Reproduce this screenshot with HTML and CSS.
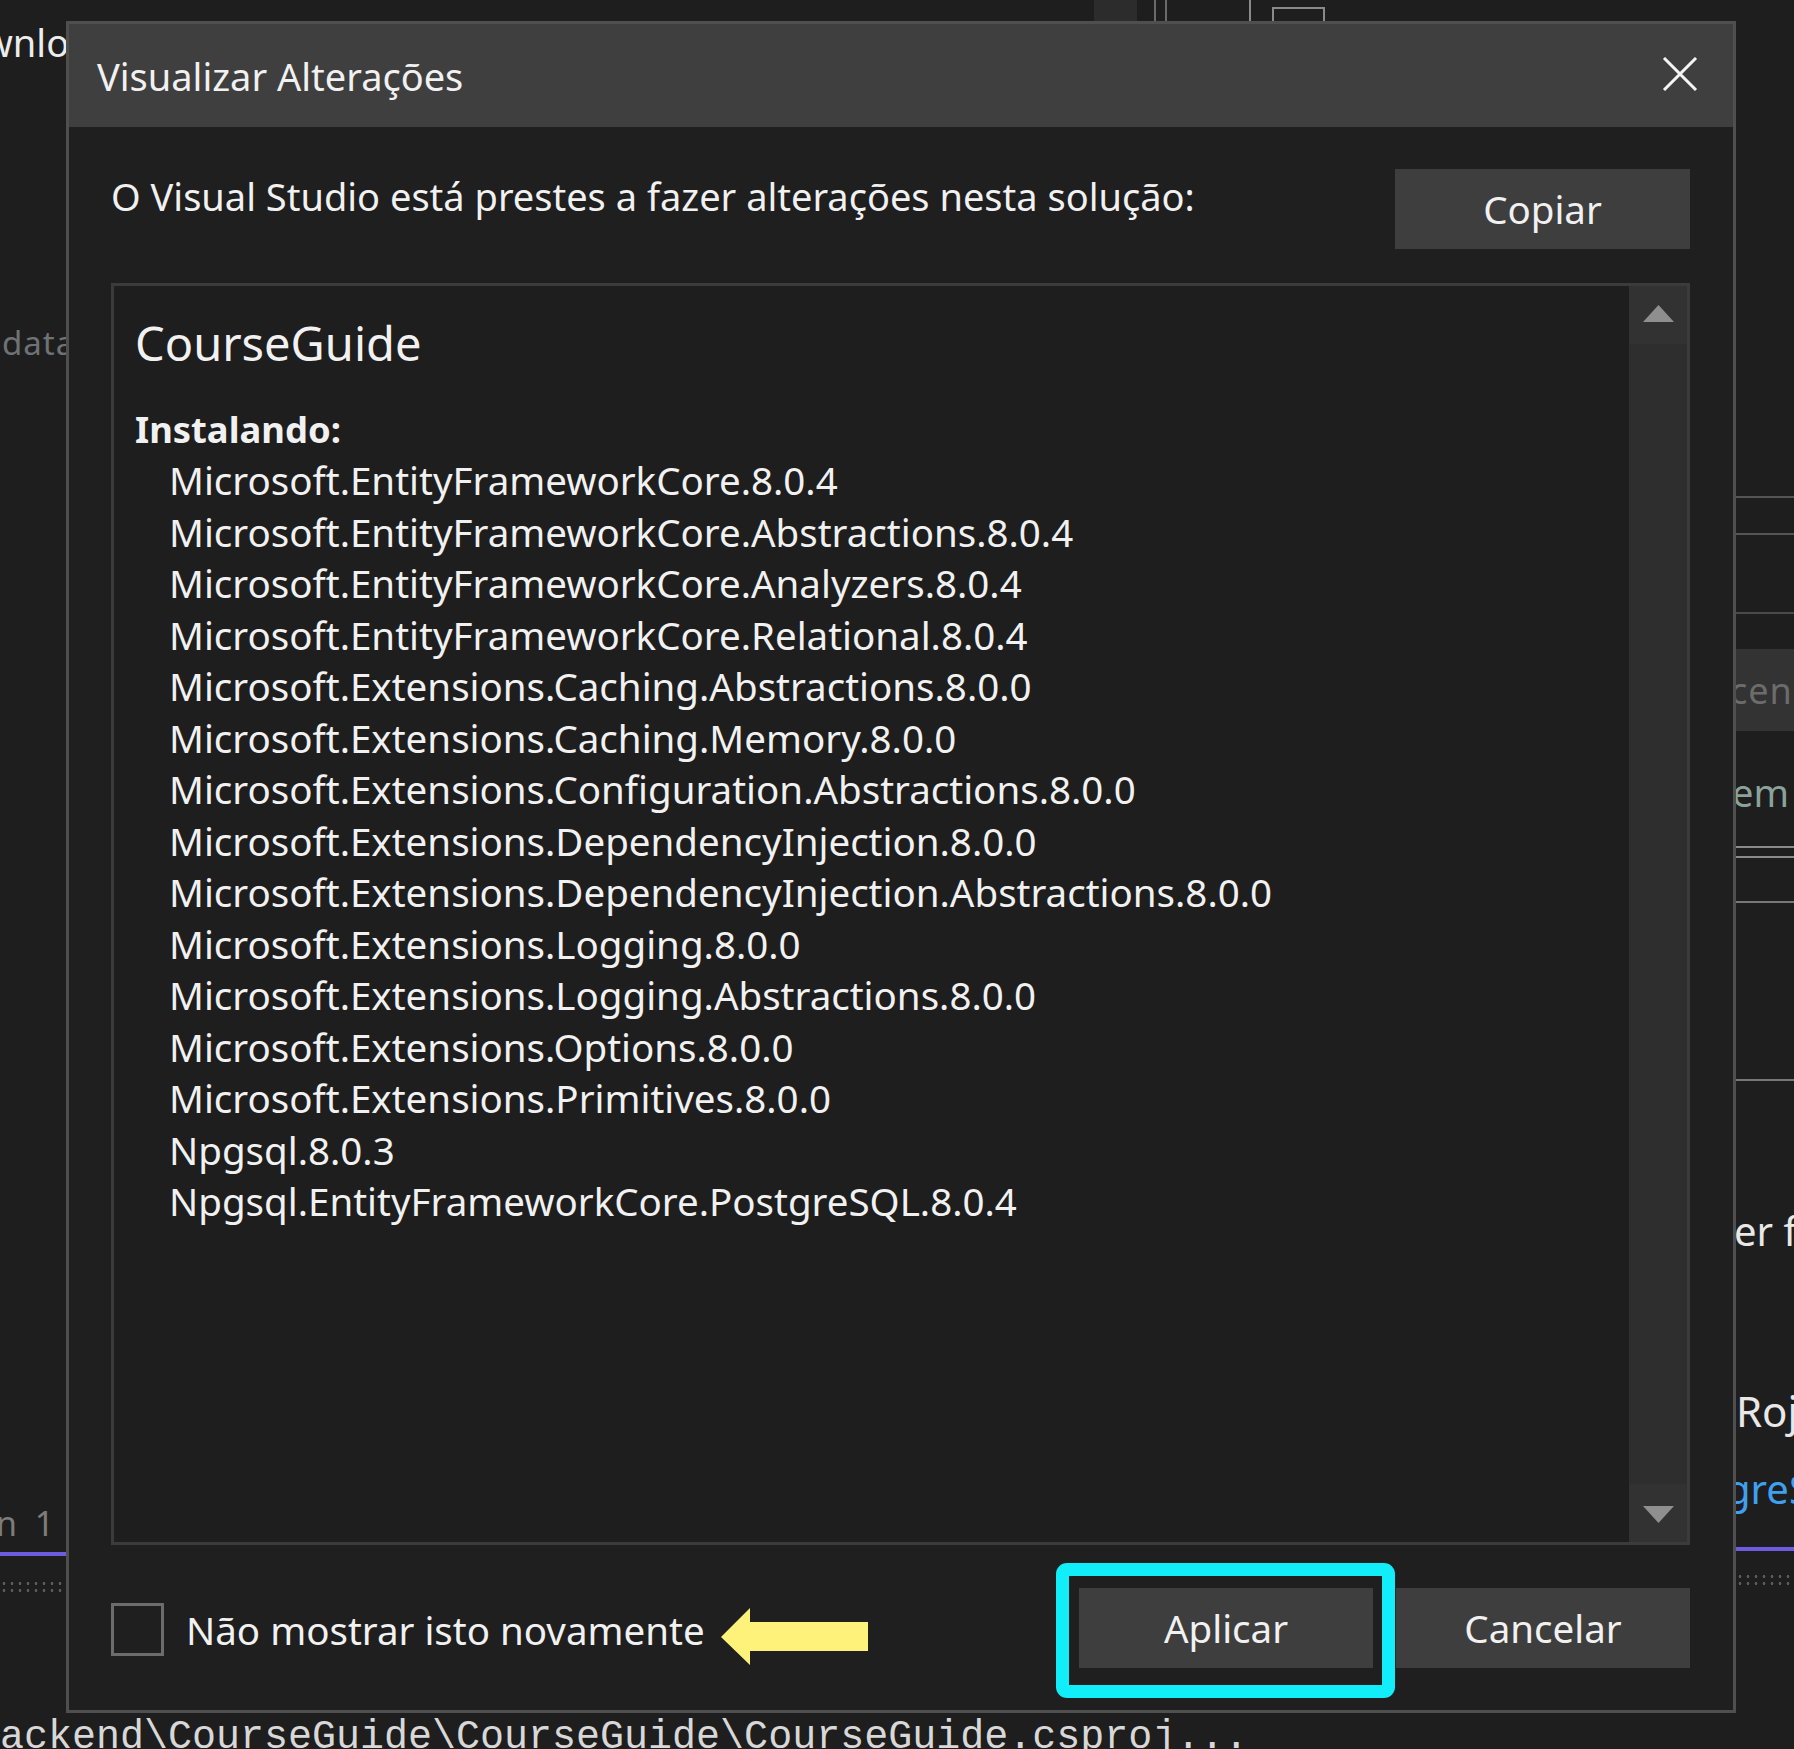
FILE: index.html
```html
<!DOCTYPE html>
<html lang="pt">
<head>
<meta charset="utf-8">
<title>Visualizar Alterações</title>
<link rel="stylesheet" href="styles.css">
</head>
<body>
<div class="ide">
  <div class="ide-left">
    <div class="frag frag-downloads">wnloads</div>
    <div class="frag frag-data">data</div>
    <div class="frag frag-ln">n&nbsp;&nbsp;1</div>
    <div class="purple-line"></div>
    <div class="dots"></div>
  </div>
  <div class="ide-middle">
    <div class="top-deco">
      <span class="deco-block"></span>
      <span class="deco-vline deco-v1"></span>
      <span class="deco-vline deco-v2"></span>
      <span class="deco-vline deco-v3"></span>
      <span class="deco-box"></span>
    </div>
  </div>
  <div class="ide-right">
    <div class="hline hl-1"></div>
    <div class="hline hl-2"></div>
    <div class="hline hl-3"></div>
    <div class="band"><span>cen</span></div>
    <div class="frag frag-em">em</div>
    <div class="hline hl-4"></div>
    <div class="hline hl-5"></div>
    <div class="hline hl-6"></div>
    <div class="hline hl-7"></div>
    <div class="frag frag-erf">er f</div>
    <div class="frag frag-roj">Roj</div>
    <div class="frag frag-gres">greS</div>
    <div class="purple-line purple-right"></div>
    <div class="dots dots-right"></div>
  </div>
  <div class="ide-bottom">ackend\CourseGuide\CourseGuide\CourseGuide.csproj...</div>
</div>

<div class="dialog" role="dialog" aria-label="Visualizar Alterações">
  <div class="titlebar">
    <span class="title">Visualizar Alterações</span>
    <svg class="close" viewBox="0 0 36 34" width="36" height="34" aria-hidden="true">
      <path d="M2 1 L34 33 M34 1 L2 33" stroke="#f4f4f4" stroke-width="3" fill="none"/>
    </svg>
  </div>
  <div class="dialog-body">
    <div class="header-row">
      <p class="intro">O Visual Studio está prestes a fazer alterações nesta solução:</p>
      <button class="btn btn-copy">Copiar</button>
    </div>
    <div class="listbox">
      <div class="list-content">
        <div class="project">CourseGuide</div>
        <div class="section">Instalando:</div>
        <ul class="packages">
          <li>Microsoft.EntityFrameworkCore.8.0.4</li>
          <li>Microsoft.EntityFrameworkCore.Abstractions.8.0.4</li>
          <li>Microsoft.EntityFrameworkCore.Analyzers.8.0.4</li>
          <li>Microsoft.EntityFrameworkCore.Relational.8.0.4</li>
          <li>Microsoft.Extensions.Caching.Abstractions.8.0.0</li>
          <li>Microsoft.Extensions.Caching.Memory.8.0.0</li>
          <li>Microsoft.Extensions.Configuration.Abstractions.8.0.0</li>
          <li>Microsoft.Extensions.DependencyInjection.8.0.0</li>
          <li>Microsoft.Extensions.DependencyInjection.Abstractions.8.0.0</li>
          <li>Microsoft.Extensions.Logging.8.0.0</li>
          <li>Microsoft.Extensions.Logging.Abstractions.8.0.0</li>
          <li>Microsoft.Extensions.Options.8.0.0</li>
          <li>Microsoft.Extensions.Primitives.8.0.0</li>
          <li>Npgsql.8.0.3</li>
          <li>Npgsql.EntityFrameworkCore.PostgreSQL.8.0.4</li>
        </ul>
      </div>
      <div class="scrollbar">
        <div class="sb-btn"><svg viewBox="0 0 31 17" width="31" height="17"><polygon points="15.5,0 31,17 0,17" fill="#8f8f8f"/></svg></div>
        <div class="sb-track"></div>
        <div class="sb-btn"><svg viewBox="0 0 31 17" width="31" height="17"><polygon points="0,0 31,0 15.5,17" fill="#8f8f8f"/></svg></div>
      </div>
    </div>
    <div class="footer">
      <span class="checkbox"></span>
      <span class="check-label">Não mostrar isto novamente</span>
      <svg class="arrow" viewBox="0 0 147 57" width="147" height="57" aria-hidden="true">
        <polygon points="0,29 29,0 29,14 147,14 147,43 29,43 29,57" fill="#fff27a"/>
      </svg>
      <div class="actions">
        <button class="btn btn-apply">Aplicar</button>
        <button class="btn btn-cancel">Cancelar</button>
      </div>
    </div>
  </div>
</div>
</body>
</html>
```
FILE: styles.css
```css
* { box-sizing: border-box; }

html, body {
  margin: 0;
  padding: 0;
}

body {
  width: 1794px;
  height: 1749px;
  overflow: hidden;
  position: relative;
  background: #1e1e1e;
  font-family: "Noto Sans", "Open Sans", sans-serif;
  color: #f1f1f1;
}

/* ---------- background IDE fragments ---------- */
.ide {
  display: grid;
  grid-template-columns: 66px 1fr 58px;
  grid-template-rows: 1713px 36px;
  height: 1749px;
  background: #1e1e1e;
}

.ide-left {
  display: flex;
  flex-direction: column;
  overflow: hidden;
  white-space: nowrap;
}

.frag {
  font-size: 38px;
  line-height: 52px;
  white-space: nowrap;
}

.frag-downloads {
  margin-top: 16px;
  margin-left: -17px;
  color: #ececec;
}

.frag-data {
  margin-top: 249px;
  margin-left: 2px;
  font-size: 33px;
  color: #6f7275;
  letter-spacing: 1px;
}

.frag-ln {
  margin-top: 1128px;
  margin-left: -4px;
  font-size: 34px;
  color: #7c7c7c;
}

.purple-line {
  height: 4px;
  margin-top: 3px;
  background: #6c5ce0;
}

.dots {
  height: 14px;
  margin-top: 24px;
  background-image: radial-gradient(circle, #5a5a5a 1.3px, transparent 1.6px);
  background-size: 8px 7px;
}

.ide-middle {
  overflow: hidden;
}

.top-deco {
  display: flex;
  height: 21px;
  align-items: stretch;
}

.deco-block {
  width: 43px;
  margin-left: 1028px;
  background: #2c2c2c;
}

.deco-vline {
  width: 2px;
  background: #6a6a6a;
}

.deco-v1 { margin-left: 17px; }
.deco-v2 { margin-left: 9px; }
.deco-v3 { margin-left: 82px; background: #8a8a8a; }

.deco-box {
  width: 53px;
  margin-left: 21px;
  margin-top: 7px;
  border: 2px solid #8a8a8a;
  border-bottom: none;
}

.ide-right {
  display: flex;
  flex-direction: column;
  overflow: hidden;
}

.hline {
  height: 2px;
  background: #555;
  flex-shrink: 0;
}

.hl-1 { margin-top: 496px; }
.hl-2 { margin-top: 35px; }
.hl-3 { margin-top: 77px; background: #4a4a4a; }

.band {
  height: 82px;
  margin-top: 35px;
  background: #333;
  display: flex;
  align-items: center;
}

.band span {
  font-size: 36px;
  color: #6c6c6c;
  margin-left: -6px;
  letter-spacing: 1px;
}

.frag-em {
  margin-top: 35px;
  color: #8aa39a;
  font-size: 38px;
  margin-left: -4px;
}

.hl-4 { margin-top: 28px; background: #8a8a8a; }
.hl-5 { margin-top: 8px; background: #8a8a8a; }
.hl-6 { margin-top: 43px; background: #777; }
.hl-7 { margin-top: 176px; background: #777; }

.frag-erf {
  margin-top: 124px;
  color: #e8e8e8;
  font-size: 40px;
  margin-left: -2px;
}

.frag-roj {
  margin-top: 128px;
  color: #e8e8e8;
  font-size: 42px;
  margin-left: 0;
}

.frag-gres {
  margin-top: 26px;
  color: #3fa0f0;
  font-size: 40px;
  margin-left: -10px;
}

.purple-right { margin-top: 32px; }
.dots-right { margin-top: 22px; }

.ide-bottom {
  grid-column: 1 / -1;
  padding-top: 5px;
  font-family: "Liberation Mono", monospace;
  font-size: 40px;
  line-height: 40px;
  color: #d8d8d8;
  white-space: nowrap;
  overflow: hidden;
}

/* ---------- dialog ---------- */
.dialog {
  position: absolute;
  left: 66px;
  top: 21px;
  width: 1670px;
  height: 1692px;
  border: 3px solid #4f4f4f;
  background: #1f1f1f;
  display: flex;
  flex-direction: column;
}

.titlebar {
  height: 103px;
  flex-shrink: 0;
  background: #3f3f3f;
  display: flex;
  align-items: center;
  padding-left: 28px;
  padding-right: 35px;
}

.title {
  font-size: 38px;
  line-height: 52px;
  color: #f1f1f1;
}

.close {
  margin-left: auto;
  margin-top: -3px;
}

.dialog-body {
  flex: 1;
  display: flex;
  flex-direction: column;
  padding: 42px 43px 42px 42px;
}

.header-row {
  display: flex;
  align-items: flex-start;
  justify-content: space-between;
}

.intro {
  margin: 1px 0 0 0;
  font-size: 38px;
  line-height: 52px;
}

.btn {
  font-family: "Noto Sans", "Open Sans", sans-serif;
  font-size: 38.5px;
  color: #f1f1f1;
  background: #3e3e3e;
  border: none;
  width: 295px;
  height: 80px;
  padding: 0;
  margin: 0;
  line-height: 80px;
}

.listbox {
  margin-top: 34px;
  height: 1262px;
  border: 3px solid #3b3b3b;
  background: #1e1e1e;
  display: flex;
}

.list-content {
  flex: 1;
  padding: 25px 0 0 21px;
}

.project {
  font-size: 47px;
  line-height: 64px;
}

.section {
  margin-top: 28px;
  font-size: 36.4px;
  font-weight: 700;
  line-height: 52px;
}

.packages {
  list-style: none;
  margin: 0;
  padding: 0 0 0 34px;
  font-size: 38.5px;
  line-height: 51.5px;
}

.scrollbar {
  width: 58px;
  display: flex;
  flex-direction: column;
  background: #2e2e2e;
}

.sb-btn {
  height: 58px;
  background: #323232;
  display: flex;
  align-items: center;
  justify-content: center;
}

.sb-btn:first-child svg { margin-top: -3px; }
.sb-btn:last-child svg { margin-top: 2px; }

.sb-track {
  flex: 1;
}

.footer {
  margin-top: 43px;
  height: 80px;
  display: flex;
  align-items: center;
}

.checkbox {
  width: 53px;
  height: 53px;
  border: 3px solid #6c6c6c;
  margin-top: 3px;
  flex-shrink: 0;
}

.check-label {
  margin-left: 22px;
  font-size: 38.5px;
  line-height: 52px;
  margin-top: 4px;
  white-space: nowrap;
}

.arrow {
  margin-left: 16px;
  margin-top: 17px;
  flex-shrink: 0;
}

.actions {
  margin-left: auto;
  display: flex;
  gap: 23px;
}

.btn-apply {
  position: relative;
  width: 294px;
}

.btn-apply::after {
  content: "";
  position: absolute;
  top: -25px;
  left: -23px;
  right: -22px;
  bottom: -30px;
  border: 13px solid #12eef9;
  border-radius: 11px;
}

.btn-cancel {
  width: 294px;
}
```
